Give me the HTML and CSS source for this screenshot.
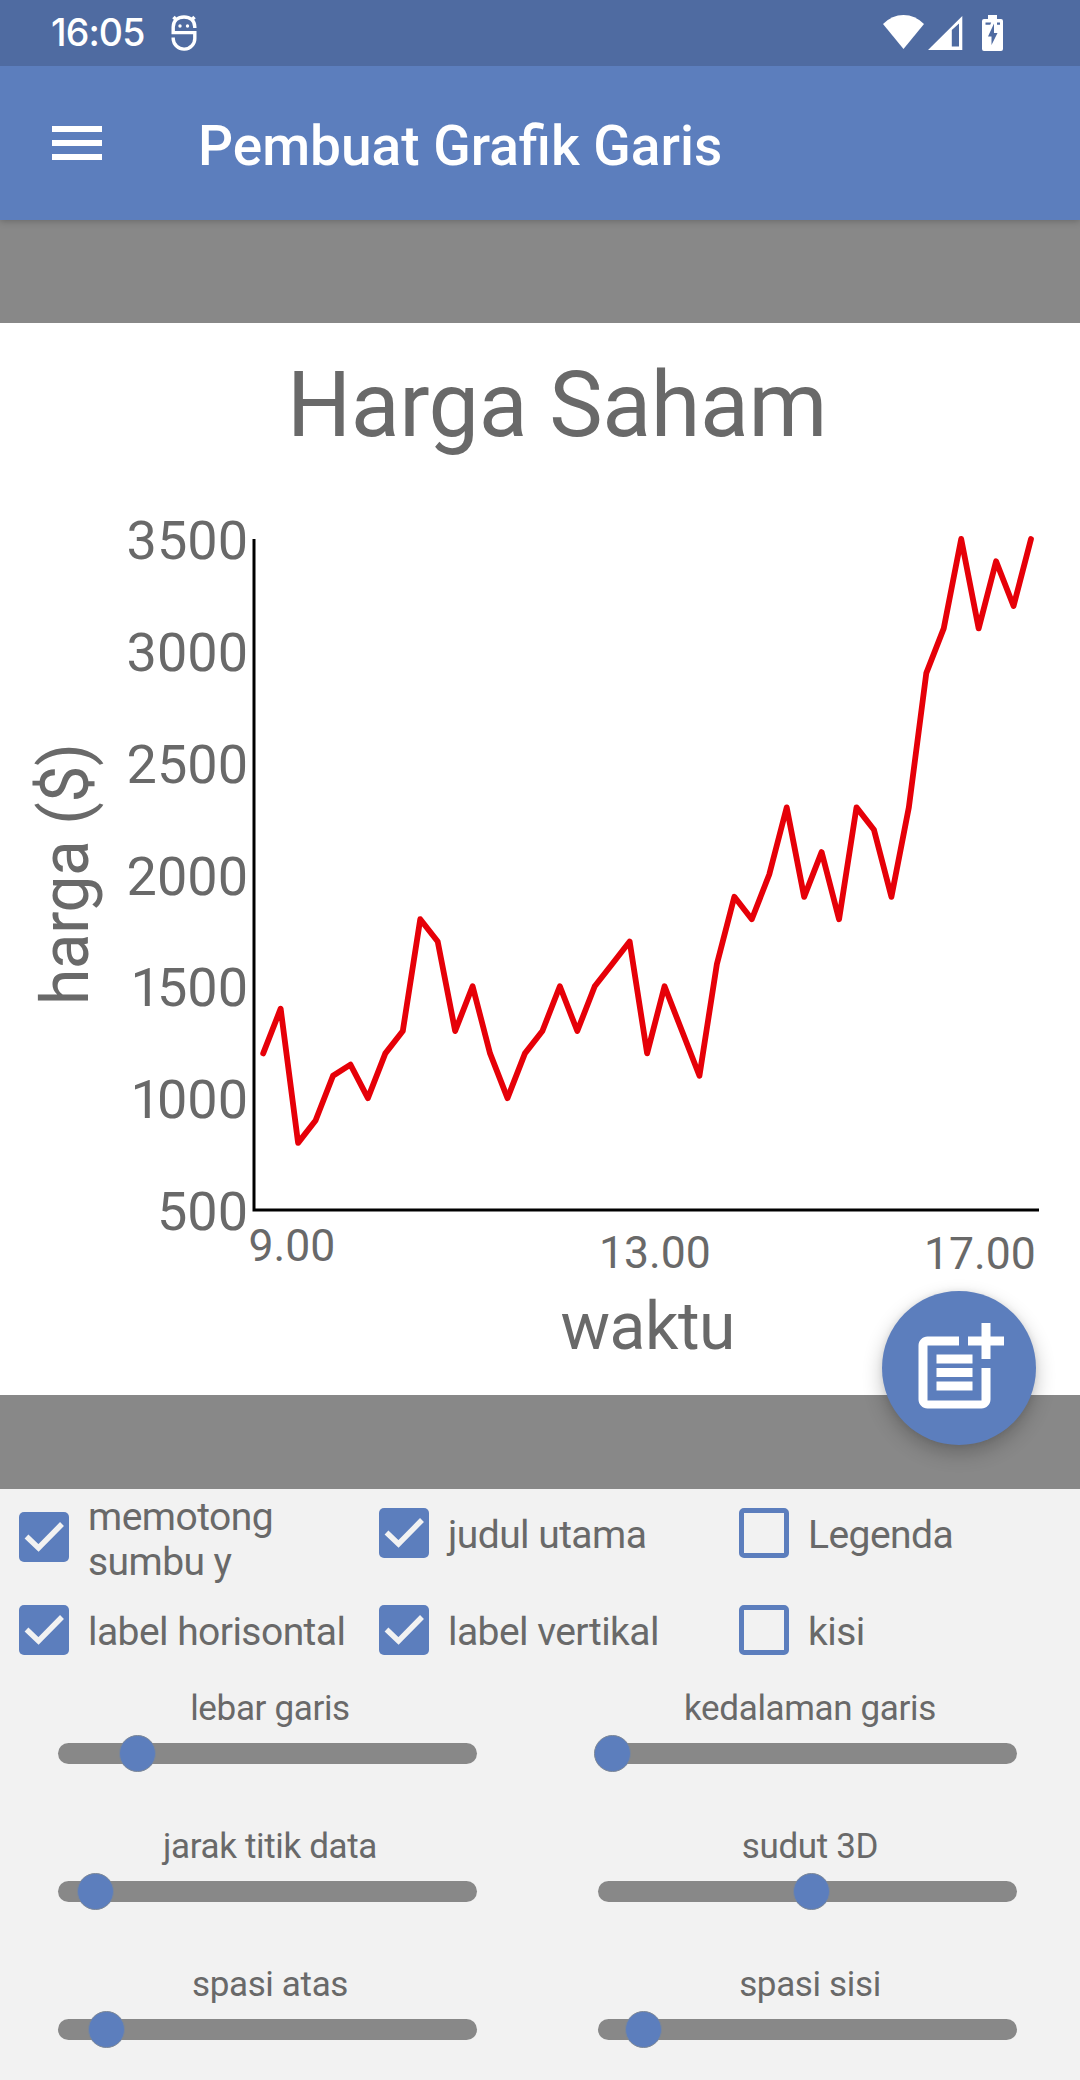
FILE: index.html
```html
<!DOCTYPE html>
<html lang="id">
<head>
<meta charset="utf-8">
<title>Pembuat Grafik Garis</title>
<link rel="stylesheet" href="styles.css">
</head>
<body>
<header class="top">
  <div class="status">
    <span class="clock">16:05</span>
    <svg class="debug" width="26" height="36" viewBox="0 0 26 36" fill="none" stroke="#fff" stroke-width="3.4">
      <path d="M2.200 17.600V12C2.200 5.500 7 2 13 2s10.800 3.500 10.800 10v1M.5 17.600h23.300v5.400a10.800 10.600 0 0 1-21.600 1v-1.500M2.500 2l3.200 3.400M23.500 2l-3.200 3.400"/>
      <circle cx="9" cy="11" r="1.700" fill="#fff" stroke="none"/>
      <circle cx="16.500" cy="11" r="1.700" fill="#fff" stroke="none"/>
    </svg>
    <div class="signals">
      <svg width="41" height="34" viewBox="0 0 41 34"><path fill="#fff" d="M0 9Q9 0 20.500 0T41 9L20.500 34z"/></svg>
      <svg class="cell" width="35" height="34" viewBox="0 0 35 34"><path fill="#fff" fill-rule="evenodd" d="M0 34L34.300 0V34zM23.800 14V30.500H31V7.500z"/></svg>
      <svg class="battery" width="21" height="36" viewBox="0 0 21 36"><path fill="#fff" fill-rule="evenodd" d="M6 0h9v4h4q2 0 2 2v28q0 2-2 2H2q-2 0-2-2V6q0-2 2-2h4zM3.500 7.500v2.200h4.700l1-2.200zM15 7.500v2.200h3V7.500zM12 8.500L6 21.500h3.500V30L15.500 18H12z"/></svg>
    </div>
  </div>
  <div class="appbar">
    <svg class="menu" width="50" height="34" viewBox="0 0 50 34"><path fill="#fff" d="M0 0h50v6H0zM0 14h50v6H0zM0 28h50v6H0z"/></svg>
    <h1 class="heading">Pembuat Grafik Garis</h1>
  </div>
</header>
<main class="stage">
  <svg class="chart" width="1080" height="1072" viewBox="0 323 1080 1072">
    <text class="title" x="287" y="436">Harga Saham</text>
    <g class="ylabels">
      <text x="248" y="559">3500</text>
      <text x="248" y="671">3000</text>
      <text x="248" y="783">2500</text>
      <text x="248" y="895">2000</text>
      <text x="244" y="1006" dx="4 -4">1500</text>
      <text x="244" y="1118" dx="4 -4">1000</text>
      <text x="248" y="1230">500</text>
    </g>
    <g class="xlabels">
      <text x="248.500" y="1261">9.00</text>
      <text x="599" y="1268">13.00</text>
      <text x="924" y="1269">17.00</text>
    </g>
    <text class="axis-title" x="560.500" y="1349">waktu</text>
    <text class="axis-title" transform="translate(88 1005) rotate(-90)">harga ($)</text>
    <path class="axis" d="M254 539V1210H1039"/>
    <polyline class="series" transform="matrix(17.45 0 0 -.22367 263.200 1321.800)" points="0,1200 1,1400 2,800 3,900 4,1100 5,1150 6,1000 7,1200 8,1300 9,1800 10,1700 11,1300 12,1500 13,1200 14,1000 15,1200 16,1300 17,1500 18,1300 19,1500 20,1600 21,1700 22,1200 23,1500 24,1300 25,1100 26,1600 27,1900 28,1800 29,2000 30,2300 31,1900 32,2100 33,1800 34,2300 35,2200 36,1900 37,2300 38,2900 39,3100 40,3500 41,3100 42,3400 43,3200 44,3500"/>
  </svg>
  <button class="fab" aria-label="Tambah data">
    <svg width="108" height="108" viewBox="0 0 24 24" fill="#fff"><path d="M17 19.220H5V7h7V5H5c-1.100 0-2 .9-2 2v12c0 1.100.9 2 2 2h12c1.100 0 2-.9 2-2v-7h-2v7.220z"/><path d="M19 2h-2v3h-3v2h3v3h2V7h3V5h-3zM7 9h8v2H7zM7 12h8v2H7zM7 15h8v2H7z"/></svg>
  </button>
</main>
<section class="panel">
  <div class="checks">
    <label class="check low"><svg class="box on" viewBox="0 0 50 50"><path d="M7.500 24.500L19.500 36L43 12"/></svg><span>memotong sumbu y</span></label>
    <label class="check"><svg class="box on" viewBox="0 0 50 50"><path d="M7.500 24.500L19.500 36L43 12"/></svg><span>judul utama</span></label>
    <label class="check"><i class="box off"></i><span>Legenda</span></label>
    <label class="check"><svg class="box on" viewBox="0 0 50 50"><path d="M7.500 24.500L19.500 36L43 12"/></svg><span>label horisontal</span></label>
    <label class="check"><svg class="box on" viewBox="0 0 50 50"><path d="M7.500 24.500L19.500 36L43 12"/></svg><span>label vertikal</span></label>
    <label class="check"><i class="box off"></i><span>kisi</span></label>
  </div>
  <div class="sliders">
    <div class="slider"><span>lebar garis</span><div class="track"><i class="thumb" style="left:79px"></i></div></div>
    <div class="slider"><span>kedalaman garis</span><div class="track"><i class="thumb" style="left:14.500px"></i></div></div>
    <div class="slider"><span>jarak titik data</span><div class="track"><i class="thumb" style="left:37.500px"></i></div></div>
    <div class="slider"><span>sudut 3D</span><div class="track"><i class="thumb" style="left:213px"></i></div></div>
    <div class="slider"><span>spasi atas</span><div class="track"><i class="thumb" style="left:48px"></i></div></div>
    <div class="slider"><span>spasi sisi</span><div class="track"><i class="thumb" style="left:45.500px"></i></div></div>
  </div>
</section>
</body>
</html>
```
FILE: styles.css
```css
* { box-sizing: border-box; }
body {
  margin: 0;
  width: 1080px;
  height: 2080px;
  overflow: hidden;
  display: flex;
  flex-direction: column;
  background: #f2f2f2;
  color: #696969;
  font-family: Roboto, "Liberation Sans", sans-serif;
}
svg { display: block; flex: none; }

.top {
  position: relative;
  z-index: 1;
  flex: none;
  color: #fff;
  background: #5c7ebd;
  box-shadow: 0 1px 7px rgba(0, 0, 0, .25);
}
.status {
  height: 66px;
  padding-left: 51px;
  display: flex;
  align-items: flex-start;
  background: #4f6ba1;
}
.clock {
  width: 120px;
  padding-top: 9px;
  font: 550 37.5px/48px Inter, sans-serif;
  letter-spacing: -.9px;
}
.debug { margin-top: 15px; }
.signals {
  display: flex;
  margin: 15px 77px 0 auto;
}
.cell { margin: 1px 0 0 4px; }
.battery { margin-left: 19px; }

.appbar {
  height: 154px;
  padding-left: 52px;
  display: flex;
  align-items: center;
}
.heading {
  margin: 6px 0 0 96px;
  font-size: 55px;
  font-weight: 500;
  line-height: 64px;
}

.stage {
  position: relative;
  flex: none;
  height: 1269px;
  padding: 103px 0 94px;
  background: #888;
}
.chart { background: #fff; fill: #696969; }
.title { font-size: 90px; letter-spacing: -.4px; }
.ylabels { font-size: 54px; text-anchor: end; }
.xlabels { font-size: 44.5px; }
.axis-title { font-size: 66px; letter-spacing: -.5px; }
.axis { fill: none; stroke: #000; stroke-width: 3; }
.series {
  fill: none;
  stroke: #e60008;
  stroke-width: 5.8;
  stroke-linecap: round;
  stroke-linejoin: round;
  vector-effect: non-scaling-stroke;
}
.fab {
  position: absolute;
  right: 44px;
  bottom: 44px;
  width: 154px;
  height: 154px;
  padding: 0;
  border: 0;
  border-radius: 50%;
  display: grid;
  place-items: center;
  background: #5c7ebd;
  box-shadow: 0 8px 20px rgba(0, 0, 0, .24), 0 0 6px rgba(0, 0, 0, .08);
}

.checks {
  display: grid;
  grid-template-columns: repeat(3, 360px);
  grid-template-rows: 88px 106px;
}
.check {
  display: flex;
  align-items: center;
  padding-left: 19px;
  font-size: 39px;
  line-height: 45px;
  letter-spacing: -.55px;
}
.check span { padding: 4px 8px 0 19px; }
.low { padding-top: 8px; }
.low span { padding-top: 6px; }
.box {
  flex: none;
  width: 50px;
  height: 50px;
  border-radius: 5px;
}
.on { background: #5c7ebd; fill: none; stroke: #f2f2f2; stroke-width: 5.5; }
.off { border: 5.5px solid #5c7ebd; }

.sliders {
  display: grid;
  grid-template-columns: 540px 540px;
  grid-auto-rows: 138px;
}
.slider {
  padding: 5px 58px 0;
  font-size: 35px;
  line-height: 42px;
  letter-spacing: -.35px;
  text-align: center;
}
.slider span { display: block; }
.track {
  position: relative;
  width: 419px;
  height: 21px;
  margin-top: 13px;
  border-radius: 11px;
  background: #888;
}
.thumb {
  position: absolute;
  top: -8px;
  width: 37px;
  height: 37px;
  margin-left: -18.5px;
  border: 1px solid #7c8797;
  border-radius: 50%;
  background: #5c7ebd;
}
```
